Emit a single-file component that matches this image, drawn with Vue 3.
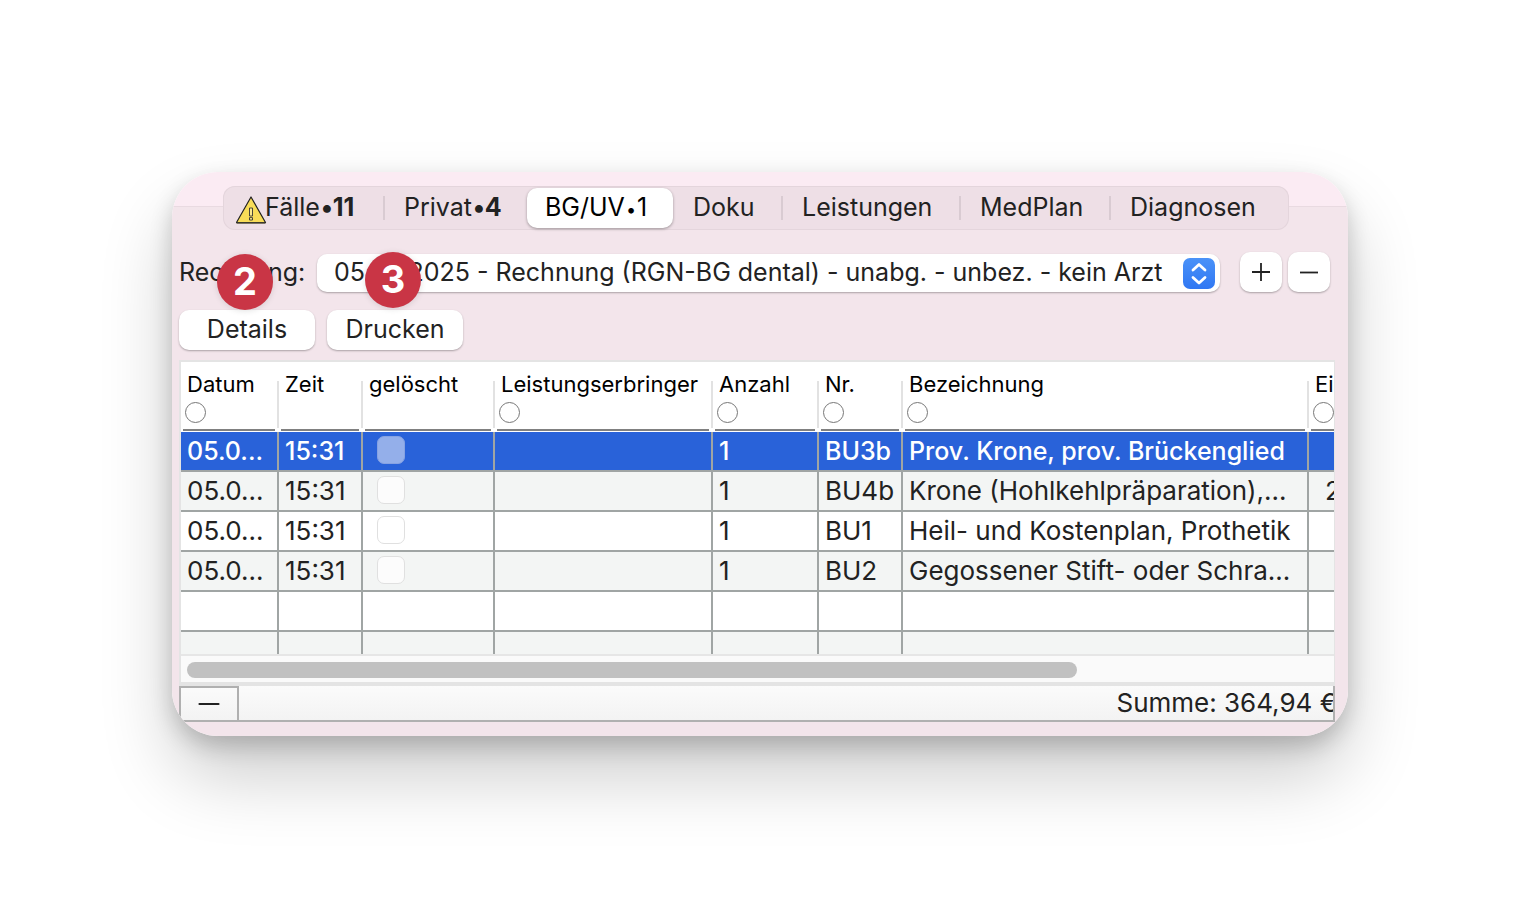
<script setup>
import { ref } from 'vue'

const tabs = [
  { label: 'Fälle', count: '11', strong: true, warn: true },
  { label: 'Privat', count: '4', strong: true, divider: true },
  { label: 'BG/UV', count: '1' },
  { label: 'Doku' },
  { label: 'Leistungen', divider: true },
  { label: 'MedPlan', divider: true },
  { label: 'Diagnosen', divider: true }
]
const activeTab = ref(2)

const columns = [
  { key: 'date', label: 'Datum', filter: true },
  { key: 'time', label: 'Zeit' },
  { key: 'deleted', label: 'gelöscht' },
  { key: 'provider', label: 'Leistungserbringer', filter: true },
  { key: 'count', label: 'Anzahl', filter: true },
  { key: 'code', label: 'Nr.', filter: true },
  { key: 'name', label: 'Bezeichnung', filter: true },
  { key: 'price', label: 'Einzelpreis', filter: true }
]

const rows = ref([
  { date: '05.0...', time: '15:31', deleted: false, count: '1', code: 'BU3b', name: 'Prov. Krone, prov. Brückenglied', price: '' },
  { date: '05.0...', time: '15:31', deleted: false, count: '1', code: 'BU4b', name: 'Krone (Hohlkehlpräparation),...', price: '2' },
  { date: '05.0...', time: '15:31', deleted: false, count: '1', code: 'BU1', name: 'Heil- und Kostenplan, Prothetik', price: '' },
  { date: '05.0...', time: '15:31', deleted: false, count: '1', code: 'BU2', name: 'Gegossener Stift- oder Schra...', price: '' }
])
const selected = ref(0)
</script>

<template>
  <main class="page">
    <section class="panel">
      <nav class="tabs">
        <button
          v-for="(tab, i) in tabs"
          :key="tab.label"
          type="button"
          class="tab"
          :class="{ active: i === activeTab, divider: tab.divider, warn: tab.warn }"
          @click="activeTab = i"
        >
          <svg v-if="tab.warn" class="warn-icon" viewBox="0 0 32 30" width="32" height="30" aria-hidden="true">
            <path d="M16 2 L30.5 27.5 H1.5 Z" fill="#f8dc58" stroke="#222" stroke-width="1.2" stroke-linejoin="round" />
            <path d="M1.5 28.2 H30.5" stroke="#55503a" stroke-width="1.2" />
            <path d="M14.5 13 H17.5 V21 H14.5 Z M14.5 22.6 H17.5 V25 H14.5 Z" fill="#fbe98f" stroke="#333" stroke-width="0.9" />
          </svg>
          <span>{{ tab.label }}<b v-if="tab.strong">•{{ tab.count }}</b><template v-else-if="tab.count"><span class="dot">•</span>{{ tab.count }}</template></span>
        </button>
      </nav>

      <div class="invoice">
        <label for="invoice">Rechnung:</label>
        <div class="select-wrap">
          <select id="invoice">
            <option>05.06.2025 - Rechnung (RGN-BG dental) - unabg. - unbez. - kein Arzt</option>
          </select>
          <svg class="stepper" viewBox="0 0 32 32" width="32" height="32" aria-hidden="true">
            <defs>
              <linearGradient id="blue" x1="0" y1="0" x2="0" y2="1">
                <stop offset="0" stop-color="#4a92f8" />
                <stop offset="1" stop-color="#3077f3" />
              </linearGradient>
            </defs>
            <rect width="32" height="31" rx="7" fill="url(#blue)" />
            <path d="M10 12 L16 6.5 L22 12 M10 19.5 L16 25 L22 19.5" fill="none" stroke="#fff" stroke-width="2.8" stroke-linecap="round" stroke-linejoin="round" />
          </svg>
        </div>
        <div class="pair">
          <button type="button" class="btn square" aria-label="Rechnung hinzufügen">
            <svg viewBox="0 0 20 20" width="20" height="20"><path d="M1 10 H19 M10 1 V19" stroke="#222" stroke-width="1.8" /></svg>
          </button>
          <button type="button" class="btn square" aria-label="Rechnung entfernen">
            <svg viewBox="0 0 20 20" width="20" height="20"><path d="M1 10.5 H19" stroke="#222" stroke-width="1.8" /></svg>
          </button>
        </div>
      </div>

      <div class="actions">
        <div class="action">
          <button type="button" class="btn">Details</button>
          <span class="badge">2</span>
        </div>
        <div class="action">
          <button type="button" class="btn">Drucken</button>
          <span class="badge raised">3</span>
        </div>
      </div>

      <div class="grid">
        <div class="viewport">
          <table>
            <colgroup>
              <col v-for="c in columns" :key="c.key" :class="'col-' + c.key" />
            </colgroup>
            <thead>
              <tr>
                <th v-for="c in columns" :key="c.key" scope="col">
                  {{ c.label }}
                  <button v-if="c.filter" type="button" class="filter" :aria-label="c.label + ' filtern'"></button>
                </th>
              </tr>
            </thead>
            <tbody>
              <tr v-for="(r, i) in rows" :key="r.code" :class="{ selected: i === selected }" @click="selected = i">
                <td>{{ r.date }}</td>
                <td>{{ r.time }}</td>
                <td class="check"><input v-model="r.deleted" type="checkbox" :aria-label="r.code + ' gelöscht'" /></td>
                <td></td>
                <td>{{ r.count }}</td>
                <td>{{ r.code }}</td>
                <td>{{ r.name }}</td>
                <td class="price">{{ r.price }}</td>
              </tr>
              <tr v-for="n in 2" :key="n">
                <td v-for="c in columns" :key="c.key"></td>
              </tr>
            </tbody>
          </table>
        </div>
        <div class="track"><div class="thumb"></div></div>
      </div>

      <footer class="footer">
        <button type="button" class="remove" aria-label="Leistung entfernen">
          <svg viewBox="0 0 22 4" width="22" height="4"><path d="M1.5 2 H20.5" stroke="#222" stroke-width="2.2" stroke-linecap="round" /></svg>
        </button>
        <span class="sum">Summe: 364,94 €</span>
      </footer>
    </section>
  </main>
</template>

<style>
body {
  background: #fff;
}
</style>

<style scoped>
* {
  box-sizing: border-box;
}
.page {
  min-height: 100vh;
  padding: 172px;
  font-family: Inter, "Liberation Sans", sans-serif;
  font-size: 25px;
  font-weight: 400;
  line-height: 32px;
  color: #222;
}
button,
select {
  font: inherit;
  color: inherit;
  margin: 0;
  border: 0;
}
.panel {
  overflow: hidden;
  padding: 14px 13px 14px 7px;
  border-radius: 46px;
  background: linear-gradient(#fbebf3 34px, #e9dae1 34px, #e9dae1 35px, #f3e5eb 35px);
  box-shadow: 0 40px 72px rgba(0, 0, 0, 0.2), 0 10px 22px rgba(0, 0, 0, 0.19);
}
.tabs {
  display: grid;
  grid-template-columns: 161fr 143fr 146fr 109fr 178fr 150fr 179fr;
  height: 44px;
  margin: 0 46px 0 44px;
  padding: 2px 0;
  border-radius: 12px;
  background: #eedfe6;
  box-shadow: inset 0 0 0 1px #e4d5dc;
}
.tab {
  position: relative;
  display: flex;
  align-items: center;
  padding: 0 0 3px 20px;
  background: none;
  font-feature-settings: "calt" 0;
  white-space: nowrap;
}
.tab.warn {
  padding-left: 12px;
}
.warn-icon {
  flex: none;
  margin: 7px -2px 0 0;
}
.tab.active {
  padding-left: 18px;
  border-radius: 10px;
  background: #fff;
  color: #000;
  box-shadow: 0 1px 3px rgba(0, 0, 0, 0.35);
}
.tab b {
  margin-left: 1px;
}
.dot {
  margin: 0 1px;
  font-size: 18px;
  line-height: 1;
}
.tab.divider::before {
  content: "";
  position: absolute;
  left: -1px;
  top: 8px;
  width: 2px;
  height: 24px;
  background: #d9cbd2;
}
.invoice {
  display: flex;
  align-items: center;
  height: 40px;
  margin: 22px 5px 0 0;
}
.invoice label {
  flex: none;
  width: 138px;
}
.select-wrap {
  position: relative;
  flex: 1;
  display: flex;
  margin-top: 2px;
}
.select-wrap select {
  appearance: none;
  width: 100%;
  height: 38px;
  padding: 0 40px 3px 17px;
  border-radius: 10px;
  background: #fff;
  box-shadow: 0 1px 2px rgba(0, 0, 0, 0.3);
}
.stepper {
  position: absolute;
  right: 5px;
  top: 4px;
  pointer-events: none;
}
.pair {
  display: flex;
  gap: 6px;
  margin-left: 20px;
}
.btn {
  display: flex;
  align-items: center;
  justify-content: center;
  width: 136px;
  height: 40px;
  padding: 0 0 2px;
  border-radius: 10px;
  background: #fff;
  box-shadow: 0 1px 2px rgba(0, 0, 0, 0.3);
}
.btn.square {
  width: 42px;
  padding: 0;
}
.actions {
  display: flex;
  gap: 12px;
  margin-top: 18px;
}
.action {
  position: relative;
}
.badge {
  position: absolute;
  left: 38px;
  bottom: 40px;
  width: 56px;
  height: 56px;
  border-radius: 50%;
  background: #c93545;
  color: #fff;
  font-size: 38px;
  font-weight: 700;
  line-height: 54px;
  text-align: center;
  box-shadow: 0 1px 6px rgba(0, 0, 0, 0.12);
}
.badge.raised {
  bottom: 42px;
}
.grid {
  margin: 10px 0 0;
  border: 2px solid #e4e4e4;
  border-width: 2px 1px 4px 2px;
  background: #fafafa;
}
.viewport {
  height: 292px;
  overflow: hidden;
  background: #fff;
}
table {
  table-layout: fixed;
  width: 1480px;
  border-collapse: separate;
  border-spacing: 0;
}
.col-date { width: 98px; }
.col-time { width: 84px; }
.col-deleted { width: 132px; }
.col-provider { width: 218px; }
.col-count { width: 106px; }
.col-code { width: 84px; }
.col-name { width: 406px; }
th {
  position: relative;
  height: 70px;
  padding: 8px 0 0 6px;
  color: #000;
  font-size: 22px;
  font-weight: 400;
  line-height: 28px;
  text-align: left;
  vertical-align: top;
  white-space: nowrap;
}
th::before {
  content: "";
  position: absolute;
  right: 0;
  top: 19px;
  bottom: 4px;
  width: 2px;
  background: #e2e2e2;
}
th::after {
  content: "";
  position: absolute;
  left: 2px;
  right: 4px;
  bottom: 1px;
  height: 2px;
  background: #808080;
}
.filter {
  display: block;
  width: 21px;
  height: 21px;
  margin: 4px 0 0 -2px;
  padding: 0;
  border: 1px solid #777;
  border-radius: 50%;
  background: #fff;
}
td {
  height: 40px;
  padding: 0 0 0 6px;
  border-right: 2px solid #a0a5a4;
  border-bottom: 2px solid #a0a5a4;
  font-size: 26px;
  font-weight: 400;
  line-height: 32px;
  white-space: nowrap;
}
tbody tr:nth-child(even) {
  background: #f3f5f4;
}
tbody tr.selected {
  background: #2962d9;
  color: #fff;
}
.selected td {
  font-size: 25px;
  font-weight: 500;
}
td.check {
  padding: 0 0 2px 14px;
}
td.price {
  padding-left: 16px;
}
.check input {
  appearance: none;
  display: block;
  width: 28px;
  height: 28px;
  margin: 0;
  border: 1px solid #e0e0e0;
  border-radius: 7px;
  background: rgba(255, 255, 255, 0.7);
}
.selected .check input {
  border-color: #86a2e2;
  background: #94afea;
}
.track {
  padding: 6px 6px 4px;
  border-top: 2px solid #e6e6e6;
}
.thumb {
  width: 78%;
  height: 16px;
  border-radius: 8px;
  background: #c1c1c1;
}
.footer {
  display: flex;
  align-items: center;
  justify-content: space-between;
  height: 36px;
  overflow: hidden;
  border: solid #b0b0b0;
  border-width: 0 2px 2px 0;
  background: linear-gradient(#fbfbfb, #f3f3f3);
}
.remove {
  display: flex;
  align-items: center;
  justify-content: center;
  width: 60px;
  height: 34px;
  padding: 0;
  border: 2px solid #b0b0b0;
  border-bottom: 0;
  background: none;
}
.sum {
  margin-right: -4px;
  font-size: 26px;
  font-weight: 400;
}
</style>
